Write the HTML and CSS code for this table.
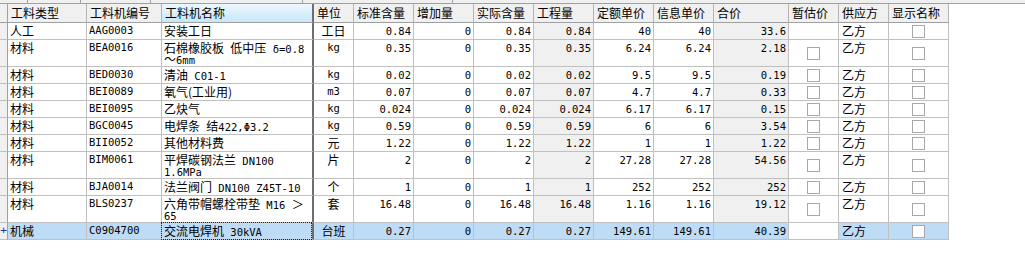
FILE: index.html
```html
<!DOCTYPE html>
<html lang="zh-CN">
<head>
<meta charset="utf-8">
<title>工料机</title>
<link rel="stylesheet" href="styles.css">
</head>
<body>
<div class="topstrip">
  <div class="seg s1"></div><div class="seg s2"></div><div class="seg s3"></div><div class="seg s4"></div><div class="seg s5"></div>
</div>
<div class="grid">
  <div class="row head">
    <div class="h rh"></div>
    <div class="h">工料类型</div>
    <div class="h">工料机编号</div>
    <div class="h name hsel">工料机名称</div>
    <div class="h">单位</div>
    <div class="h">标准含量</div>
    <div class="h">增加量</div>
    <div class="h">实际含量</div>
    <div class="h">工程量</div>
    <div class="h">定额单价</div>
    <div class="h">信息单价</div>
    <div class="h">合价</div>
    <div class="h">暂估价</div>
    <div class="h">供应方</div>
    <div class="h">显示名称</div>
  </div>

  <div class="row">
    <div class="c rh"></div>
    <div class="c">人工</div>
    <div class="c m">AAG0003</div>
    <div class="c name">安装工日</div>
    <div class="c unit">工日</div>
    <div class="c num">0.84</div>
    <div class="c num">0</div>
    <div class="c num">0.84</div>
    <div class="c num gray">0.84</div>
    <div class="c num">40</div>
    <div class="c num">40</div>
    <div class="c num gray">33.6</div>
    <div class="c cbc"></div>
    <div class="c sup">乙方</div>
    <div class="c cbc"><span class="cb"></span></div>
  </div>

  <div class="row tall">
    <div class="c rh"></div>
    <div class="c">材料</div>
    <div class="c m">BEA0016</div>
    <div class="c name">石棉橡胶板<span class="m"> </span>低中压<span class="m"> δ=0.8</span><br>～<span class="m">6mm</span></div>
    <div class="c unit m">kg</div>
    <div class="c num">0.35</div>
    <div class="c num">0</div>
    <div class="c num">0.35</div>
    <div class="c num gray">0.35</div>
    <div class="c num">6.24</div>
    <div class="c num">6.24</div>
    <div class="c num gray">2.18</div>
    <div class="c cbc"><span class="cb"></span></div>
    <div class="c sup">乙方</div>
    <div class="c cbc"><span class="cb"></span></div>
  </div>

  <div class="row">
    <div class="c rh"></div>
    <div class="c">材料</div>
    <div class="c m">BED0030</div>
    <div class="c name">清油<span class="m"> C01-1</span></div>
    <div class="c unit m">kg</div>
    <div class="c num">0.02</div>
    <div class="c num">0</div>
    <div class="c num">0.02</div>
    <div class="c num gray">0.02</div>
    <div class="c num">9.5</div>
    <div class="c num">9.5</div>
    <div class="c num gray">0.19</div>
    <div class="c cbc"><span class="cb"></span></div>
    <div class="c sup">乙方</div>
    <div class="c cbc"><span class="cb"></span></div>
  </div>

  <div class="row">
    <div class="c rh"></div>
    <div class="c">材料</div>
    <div class="c m">BEI0089</div>
    <div class="c name">氧气(工业用)</div>
    <div class="c unit m">m3</div>
    <div class="c num">0.07</div>
    <div class="c num">0</div>
    <div class="c num">0.07</div>
    <div class="c num gray">0.07</div>
    <div class="c num">4.7</div>
    <div class="c num">4.7</div>
    <div class="c num gray">0.33</div>
    <div class="c cbc"><span class="cb"></span></div>
    <div class="c sup">乙方</div>
    <div class="c cbc"><span class="cb"></span></div>
  </div>

  <div class="row">
    <div class="c rh"></div>
    <div class="c">材料</div>
    <div class="c m">BEI0095</div>
    <div class="c name">乙炔气</div>
    <div class="c unit m">kg</div>
    <div class="c num">0.024</div>
    <div class="c num">0</div>
    <div class="c num">0.024</div>
    <div class="c num gray">0.024</div>
    <div class="c num">6.17</div>
    <div class="c num">6.17</div>
    <div class="c num gray">0.15</div>
    <div class="c cbc"><span class="cb"></span></div>
    <div class="c sup">乙方</div>
    <div class="c cbc"><span class="cb"></span></div>
  </div>

  <div class="row">
    <div class="c rh"></div>
    <div class="c">材料</div>
    <div class="c m">BGC0045</div>
    <div class="c name">电焊条<span class="m"> </span>结<span class="m">422,Φ3.2</span></div>
    <div class="c unit m">kg</div>
    <div class="c num">0.59</div>
    <div class="c num">0</div>
    <div class="c num">0.59</div>
    <div class="c num gray">0.59</div>
    <div class="c num">6</div>
    <div class="c num">6</div>
    <div class="c num gray">3.54</div>
    <div class="c cbc"><span class="cb"></span></div>
    <div class="c sup">乙方</div>
    <div class="c cbc"><span class="cb"></span></div>
  </div>

  <div class="row">
    <div class="c rh"></div>
    <div class="c">材料</div>
    <div class="c m">BII0052</div>
    <div class="c name">其他材料费</div>
    <div class="c unit">元</div>
    <div class="c num">1.22</div>
    <div class="c num">0</div>
    <div class="c num">1.22</div>
    <div class="c num gray">1.22</div>
    <div class="c num">1</div>
    <div class="c num">1</div>
    <div class="c num gray">1.22</div>
    <div class="c cbc"><span class="cb"></span></div>
    <div class="c sup">乙方</div>
    <div class="c cbc"><span class="cb"></span></div>
  </div>

  <div class="row tall">
    <div class="c rh"></div>
    <div class="c">材料</div>
    <div class="c m">BIM0061</div>
    <div class="c name">平焊碳钢法兰<span class="m"> DN100</span><br><span class="m">1.6MPa</span></div>
    <div class="c unit">片</div>
    <div class="c num">2</div>
    <div class="c num">0</div>
    <div class="c num">2</div>
    <div class="c num gray">2</div>
    <div class="c num">27.28</div>
    <div class="c num">27.28</div>
    <div class="c num gray">54.56</div>
    <div class="c cbc"><span class="cb"></span></div>
    <div class="c sup">乙方</div>
    <div class="c cbc"><span class="cb"></span></div>
  </div>

  <div class="row">
    <div class="c rh"></div>
    <div class="c">材料</div>
    <div class="c m">BJA0014</div>
    <div class="c name">法兰阀门<span class="m"> DN100 Z45T-10</span></div>
    <div class="c unit">个</div>
    <div class="c num">1</div>
    <div class="c num">0</div>
    <div class="c num">1</div>
    <div class="c num gray">1</div>
    <div class="c num">252</div>
    <div class="c num">252</div>
    <div class="c num gray">252</div>
    <div class="c cbc"><span class="cb"></span></div>
    <div class="c sup">乙方</div>
    <div class="c cbc"><span class="cb"></span></div>
  </div>

  <div class="row tall">
    <div class="c rh"></div>
    <div class="c">材料</div>
    <div class="c m">BLS0237</div>
    <div class="c name">六角带帽螺栓带垫<span class="m"> M16 </span>＞<br><span class="m">65</span></div>
    <div class="c unit">套</div>
    <div class="c num">16.48</div>
    <div class="c num">0</div>
    <div class="c num">16.48</div>
    <div class="c num gray">16.48</div>
    <div class="c num">1.16</div>
    <div class="c num">1.16</div>
    <div class="c num gray">19.12</div>
    <div class="c cbc"><span class="cb"></span></div>
    <div class="c sup">乙方</div>
    <div class="c cbc"><span class="cb"></span></div>
  </div>

  <div class="row sel">
    <div class="c rh"><span class="plus">+</span></div>
    <div class="c">机械</div>
    <div class="c m">C0904700</div>
    <div class="c name focus">交流电焊机<span class="m"> 30kVA</span></div>
    <div class="c unit">台班</div>
    <div class="c num">0.27</div>
    <div class="c num">0</div>
    <div class="c num">0.27</div>
    <div class="c num gray">0.27</div>
    <div class="c num">149.61</div>
    <div class="c num">149.61</div>
    <div class="c num gray">40.39</div>
    <div class="c cbc white"></div>
    <div class="c sup">乙方</div>
    <div class="c cbc"><span class="cb"></span></div>
  </div>
</div>
</body>
</html>
```

FILE: styles.css
```css
* { box-sizing: border-box; }
html, body { margin: 0; padding: 0; background: #fff; }
body {
  font-family: "Noto Sans CJK SC", sans-serif;
  font-size: 12px;
  color: #000;
  width: 1025px;
  height: 276px;
  overflow: hidden;
}
.topstrip {
  height: 4px;
  background: #f0f0f0;
  border-bottom: 1px solid #a0a0a0;
  display: flex;
}
.topstrip .seg { height: 3px; border-right: 1px solid #a0a0a0; }
.topstrip .s1 { width: 28px; }
.topstrip .s2 { width: 53px; }
.topstrip .s3 { width: 70px; }
.topstrip .s4 { width: 152px; }
.topstrip .s5 { width: 150px; }

.grid { width: 949px; }
.row {
  display: grid;
  grid-template-columns: 8px 79px 75px 152px 40px 60px 60px 60px 60px 60px 60px 75px 50px 50px 60px;
  height: 17px;
}
.row.tall { height: 27px; }
.row.head { height: 19px; background: #f0f0f0; }

.h {
  border-right: 1px solid #b4b4b4;
  border-bottom: 1px solid #a0a0a0;
  line-height: 18px;
  padding: 0 3px;
  white-space: nowrap;
  overflow: hidden;
}
.h.hsel { background: linear-gradient(#eef8fe, #c6e7f9); }

.c {
  border-right: 1px solid #c0c0c0;
  border-bottom: 1px solid #c0c0c0;
  padding: 1px 2px 0;
  line-height: 13px;
  white-space: nowrap;
  overflow: hidden;
}
.rh { background: #f0f0f0; border-right-color: #a0a0a0; padding: 0; }
.h.name, .c.name { border-right: 2px solid #6e6e6e; }
.m, .num {
  font-family: "DejaVu Sans Mono", "Noto Sans CJK SC", monospace;
  font-size: 10.5px;
}
.name .m { line-height: 0; }
.tall .name { line-height: 11px; padding-top: 2px; }
.num { text-align: right; line-height: 14px; }
.unit { text-align: center; }
.gray { background: #f0f0f0; }
.sup { padding-left: 3px; }
.cbc { display: flex; align-items: center; justify-content: center; padding: 0; }
.cb {
  display: block;
  width: 13px;
  height: 13px;
  border: 1px solid #a8a8a8;
  background: #fff;
}
.sel .c { background: #bedcf6; }
.sel .c.rh { background: #f0f0f0; }
.sel .c.white { background: #fff; }
.plus {
  display: block;
  color: #1c34b8;
  font-family: "DejaVu Sans Mono", monospace;
  font-size: 11px;
  line-height: 15px;
  text-align: center;
}
.focus { position: relative; overflow: visible; }
.focus::after {
  content: "";
  position: absolute;
  left: -1px;
  top: -1px;
  right: 0;
  bottom: -1px;
  border: 1px dotted #222;
}
```
